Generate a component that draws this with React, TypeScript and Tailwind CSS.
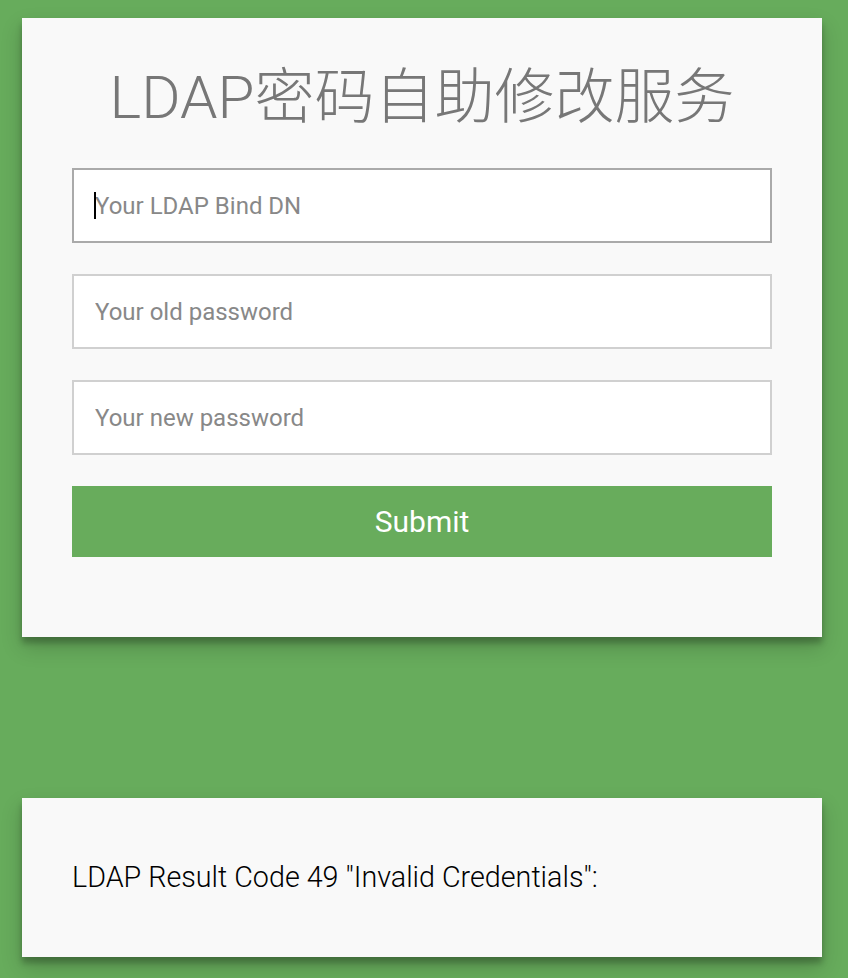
import React from "react";

export default function App() {
  const font = { fontFamily: 'Roboto, "Noto Sans CJK SC", sans-serif' };
  return (
    <div className="min-h-[978px] w-full bg-[#67ac5c] pt-[18px] pb-[21px]" style={font}>
      <div className="mx-[22px] w-[800px] bg-[#f9f9f9] px-[50px] pt-[40px] pb-[80px] shadow-[0_10px_20px_rgba(0,0,0,0.19),0_6px_6px_rgba(0,0,0,0.23)]">
        <h1 className="text-center text-[60px] font-light leading-[80px] text-[#777777] mb-[30px]">
          LDAP密码自助修改服务
        </h1>
        <form className="flex flex-col gap-[31px]" onSubmit={(e) => e.preventDefault()}>
          <div className="relative">
            <input
              type="text"
              placeholder="Your LDAP Bind DN"
              className="h-[75px] w-full border-2 border-[#aaaaaa] bg-white px-[21px] text-[24px] text-[#333] outline-none placeholder:text-[#888888]"
            />
            <span className="pointer-events-none absolute left-[22px] top-[24px] h-[27px] w-[2px] bg-black" />
          </div>
          <input
            type="password"
            placeholder="Your old password"
            className="h-[75px] w-full border-2 border-[#d0d0d0] bg-white px-[21px] text-[24px] text-[#333] outline-none placeholder:text-[#888888]"
          />
          <input
            type="password"
            placeholder="Your new password"
            className="h-[75px] w-full border-2 border-[#d0d0d0] bg-white px-[21px] text-[24px] text-[#333] outline-none placeholder:text-[#888888]"
          />
          <button
            type="submit"
            className="h-[71px] w-full bg-[#68ac5c] text-[30px] font-normal text-white"
          >
            Submit
          </button>
        </form>
      </div>
      <div className="mx-[22px] mt-[161px] flex h-[159px] w-[800px] items-center bg-[#f9f9f9] px-[50px] shadow-[0_10px_20px_rgba(0,0,0,0.19),0_6px_6px_rgba(0,0,0,0.23)]">
        <p className="text-[28.7px] font-light text-black">LDAP Result Code 49 "Invalid Credentials":</p>
      </div>
    </div>
  );
}
